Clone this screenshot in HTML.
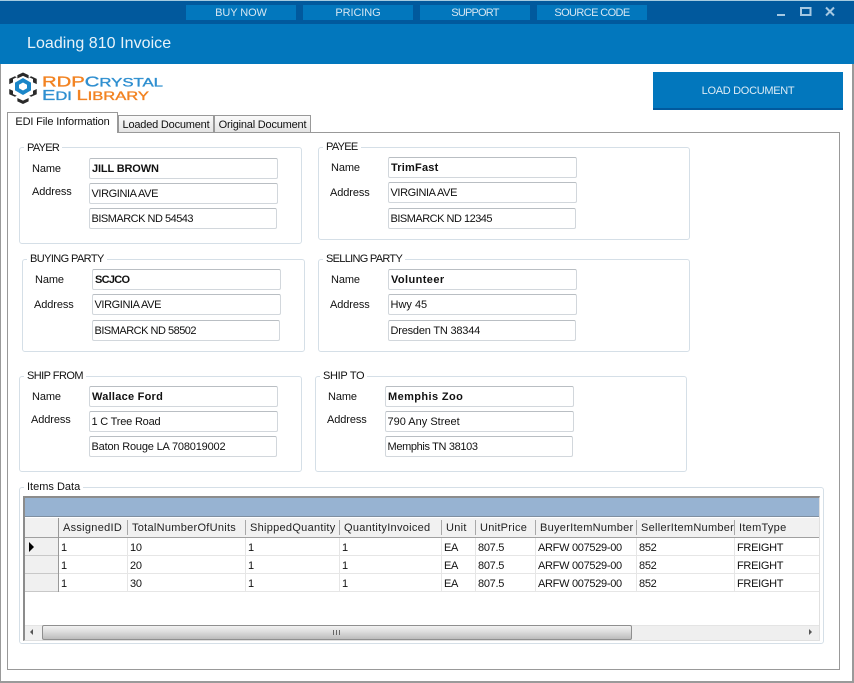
<!DOCTYPE html>
<html>
<head>
<meta charset="utf-8">
<style>
html,body{margin:0;padding:0;background:#fff}
#w{position:relative;width:854px;height:683px;overflow:hidden;background:#fff;font:11px "Liberation Sans",sans-serif;color:#111}
#w div,#w span.t{position:absolute;white-space:nowrap;box-sizing:border-box}
.t{line-height:18px;height:18px;letter-spacing:-.1px}
.nav{top:5px;width:110px;height:15px;background:#0277bd;color:#d5e6f2;text-align:center;line-height:17px;font-size:11px}
.g{border:1px solid #d5dfe7;border-radius:3px}
.l{background:#fff;padding:0 3px;line-height:14px;height:13px}
.i{height:21px;border:1px solid #d2d7dc;border-top-color:#b9bec3;border-radius:2px;line-height:21px;padding-left:1.5px;background:#fff;letter-spacing:-.4px}
.b{font-weight:bold;letter-spacing:.3px;padding-left:2px}
.h{top:518px;height:19px;line-height:20px;color:#222;letter-spacing:.28px}
.s{top:520px;width:1px;height:15px;background:#a8a8a8}
.c{height:18px;line-height:20px;letter-spacing:-.3px}
.rl{left:25px;width:33px;height:18px;background:#f0f0f0;border-bottom:1px solid #c8c8c8}
.v{top:538px;width:1px;height:54px;background:#e6e6e6}
.hl{left:59px;width:760px;height:1px;background:#e6e6e6}
</style>
</head>
<body>
<div id="w">
<!-- window chrome -->
<div style="left:0;top:0;width:854px;height:1px;background:#a5cbe0"></div>
<div style="left:0;top:1px;width:854px;height:23px;background:#01599d"></div>
<div style="left:0;top:24px;width:854px;height:40px;background:#0277bd"></div>
<div style="left:0;top:64px;width:1px;height:619px;background:#9a9a9a"></div>
<div style="left:852px;top:64px;width:2px;height:619px;background:#9a9a9a"></div>
<div style="left:0;top:681px;width:854px;height:2px;background:#9a9a9a"></div>

<div class="nav" style="left:186px;letter-spacing:-.1px">BUY NOW</div>
<div class="nav" style="left:303px;letter-spacing:-.1px">PRICING</div>
<div class="nav" style="left:420px;letter-spacing:-.8px">SUPPORT</div>
<div class="nav" style="left:537px;letter-spacing:-.6px">SOURCE CODE</div>

<svg style="position:absolute;left:770px;top:0" width="84" height="24" viewBox="0 0 84 24">
<rect x="7" y="14" width="8" height="2" fill="#a5c8e2"/>
<rect x="31" y="8" width="9.500" height="7" fill="none" stroke="#a5c8e2" stroke-width="2"/>
<path d="M56 7.500l8 8M64 7.500l-8 8" stroke="#a5c8e2" stroke-width="2" fill="none"/>
</svg>

<div style="left:27px;top:34px;height:20px;line-height:20px;font-size:16px;color:#e8f2f9;letter-spacing:.05px">Loading 810 Invoice</div>

<!-- logo -->
<svg style="position:absolute;left:8px;top:72px" width="160" height="32" viewBox="0 0 160 32">
<g fill="#2a2a2a" transform="translate(15 0) scale(1.25 1) translate(-15 0)">
<path d="M15 0.500l4.500 2.600v3.400l-4.500-2.600-4.500 2.600v-3.400z"/>
<path d="M21.500 4.300l4.500 2.600v5.200l-3 -1.700v-3.400l-3-1.700z"/>
<path d="M26 17v5.200l-4.500 2.600-1.500-1 3-1.700v-3.400z"/>
<path d="M19.500 26v3.400l-4.500 2.600-4.500-2.600v-3.400l4.500 2.600z"/>
<path d="M8.500 24.800l-4.500-2.600v-5.200l3 1.700v3.400l3 1.700z"/>
<path d="M4 12.100v-5.200l4.500-2.600 1.500 1-3 1.700v3.400z"/>
</g>
<path fill-rule="evenodd" d="M15 6l8 4.600v7.800l-8 4.600-8-4.600v-7.800zM15 10.500l-4 2.300v3.400l4 2.300 4-2.300v-3.400z" fill="#1a86c8"/>
<g stroke-width=".35">
<text x="34" y="14.500" font-family="Liberation Sans" font-size="14.500" textLength="121" lengthAdjust="spacingAndGlyphs"><tspan fill="#f28322" stroke="#f28322">RDP</tspan><tspan fill="#2f8fd0" stroke="#2f8fd0">C</tspan><tspan fill="#2f8fd0" stroke="#2f8fd0" font-size="12">RYSTAL</tspan></text>
<text x="34" y="28" font-family="Liberation Sans" font-size="14.500" textLength="107" lengthAdjust="spacingAndGlyphs"><tspan fill="#2f8fd0" stroke="#2f8fd0">E</tspan><tspan fill="#2f8fd0" stroke="#2f8fd0" font-size="12">DI </tspan><tspan fill="#f28322" stroke="#f28322">L</tspan><tspan fill="#f28322" stroke="#f28322" font-size="12">IBRARY</tspan></text>
</g>
</svg>

<div style="left:653px;top:72px;width:190px;height:38px;background:#0277bd;border-bottom:2px solid #01599d;color:#dcebf5;text-align:center;line-height:39px;font-size:11px;letter-spacing:-.3px">LOAD DOCUMENT</div>

<!-- tab panel -->
<div style="left:7px;top:132px;width:833px;height:538px;border:1px solid #999"></div>
<div style="left:118px;top:115px;width:96px;height:18px;background:linear-gradient(#fafafa,#e4e4e4);border:1px solid #999;text-align:center;line-height:18px;letter-spacing:-.2px">Loaded Document</div>
<div style="left:214px;top:115px;width:97px;height:18px;background:linear-gradient(#fafafa,#e4e4e4);border:1px solid #999;text-align:center;line-height:18px;letter-spacing:-.2px">Original Document</div>
<div style="left:7px;top:112px;width:111px;height:21px;background:#fff;border:1px solid #999;border-bottom:0;text-align:center;line-height:19px;letter-spacing:-.15px">EDI File Information</div>

<!-- PAYER -->
<div class="g" style="left:19px;top:147px;width:283px;height:97px"></div>
<div class="l" style="left:24px;top:141px;letter-spacing:-.7px">PAYER</div>
<span class="t" style="left:32px;top:160px">Name</span>
<span class="t" style="left:32px;top:183px">Address</span>
<div class="i b" style="left:89px;top:158px;width:189px;letter-spacing:-.15px">JILL BROWN</div>
<div class="i" style="left:89px;top:183px;width:189px">VIRGINIA AVE</div>
<div class="i" style="left:89px;top:208px;width:188px;letter-spacing:-.5px">BISMARCK ND 54543</div>

<!-- PAYEE -->
<div class="g" style="left:318px;top:147px;width:372px;height:93px"></div>
<div class="l" style="left:323px;top:140px;letter-spacing:-.7px">PAYEE</div>
<span class="t" style="left:331px;top:159px">Name</span>
<span class="t" style="left:330px;top:184px">Address</span>
<div class="i b" style="left:388px;top:157px;width:189px;letter-spacing:.2px">TrimFast</div>
<div class="i" style="left:388px;top:182px;width:189px">VIRGINIA AVE</div>
<div class="i" style="left:388px;top:208px;width:188px;letter-spacing:-.5px">BISMARCK ND 12345</div>

<!-- BUYING PARTY -->
<div class="g" style="left:22px;top:259px;width:283px;height:93px"></div>
<div class="l" style="left:27px;top:252px;letter-spacing:-.6px">BUYING PARTY</div>
<span class="t" style="left:35px;top:271px">Name</span>
<span class="t" style="left:34px;top:296px">Address</span>
<div class="i b" style="left:92px;top:269px;width:189px;letter-spacing:-.7px">SCJCO</div>
<div class="i" style="left:92px;top:294px;width:189px">VIRGINIA AVE</div>
<div class="i" style="left:92px;top:320px;width:188px;letter-spacing:-.5px">BISMARCK ND 58502</div>

<!-- SELLING PARTY -->
<div class="g" style="left:318px;top:259px;width:372px;height:93px"></div>
<div class="l" style="left:323px;top:252px;letter-spacing:-.7px">SELLING PARTY</div>
<span class="t" style="left:331px;top:271px">Name</span>
<span class="t" style="left:330px;top:296px">Address</span>
<div class="i b" style="left:388px;top:269px;width:189px;letter-spacing:.4px">Volunteer</div>
<div class="i" style="left:388px;top:294px;width:189px;letter-spacing:0">Hwy 45</div>
<div class="i" style="left:388px;top:320px;width:188px;letter-spacing:-.2px">Dresden TN 38344</div>

<!-- SHIP FROM -->
<div class="g" style="left:19px;top:376px;width:283px;height:96px"></div>
<div class="l" style="left:24px;top:369px;letter-spacing:-.55px">SHIP FROM</div>
<span class="t" style="left:32px;top:388px">Name</span>
<span class="t" style="left:31px;top:411px">Address</span>
<div class="i b" style="left:89px;top:386px;width:189px;letter-spacing:.25px">Wallace Ford</div>
<div class="i" style="left:89px;top:411px;width:189px;letter-spacing:-.2px">1 C Tree Road</div>
<div class="i" style="left:89px;top:436px;width:188px;letter-spacing:-.18px">Baton Rouge LA 708019002</div>

<!-- SHIP TO -->
<div class="g" style="left:315px;top:376px;width:372px;height:96px"></div>
<div class="l" style="left:320px;top:369px;letter-spacing:-.3px">SHIP TO</div>
<span class="t" style="left:328px;top:388px">Name</span>
<span class="t" style="left:327px;top:411px">Address</span>
<div class="i b" style="left:385px;top:386px;width:189px;letter-spacing:.4px">Memphis Zoo</div>
<div class="i" style="left:385px;top:411px;width:189px;letter-spacing:0">790 Any Street</div>
<div class="i" style="left:385px;top:436px;width:188px;letter-spacing:-.35px">Memphis TN 38103</div>

<!-- ITEMS -->
<div class="g" style="left:19px;top:487px;width:805px;height:157px"></div>
<div class="l" style="left:24px;top:480px">Items Data</div>
<div style="left:23px;top:496px;width:797px;height:145px;background:#fff;border-left:2px solid #8c8c8c;border-top:2px solid #8c8c8c;border-right:1px solid #e0e0e0;border-bottom:1px solid #e0e0e0"></div>
<div style="left:25px;top:498px;width:794px;height:19px;background:#97b3d2;border-bottom:1px solid #7f8fa0"></div>
<div style="left:25px;top:518px;width:794px;height:20px;background:#f1f1f1;border-bottom:1px solid #a0a0a0"></div>
<div style="left:58px;top:518px;width:1px;height:74px;background:#999"></div>

<div class="h" style="left:63px">AssignedID</div>
<div class="h" style="left:132px">TotalNumberOfUnits</div>
<div class="h" style="left:250px">ShippedQuantity</div>
<div class="h" style="left:344px">QuantityInvoiced</div>
<div class="h" style="left:446px">Unit</div>
<div class="h" style="left:480px">UnitPrice</div>
<div class="h" style="left:540px">BuyerItemNumber</div>
<div class="h" style="left:641px">SellerItemNumber</div>
<div class="h" style="left:739px">ItemType</div>
<div class="s" style="left:127px"></div><div class="s" style="left:245px"></div><div class="s" style="left:339px"></div><div class="s" style="left:441px"></div><div class="s" style="left:475px"></div><div class="s" style="left:535px"></div><div class="s" style="left:636px"></div><div class="s" style="left:734px"></div>

<div class="v" style="left:127px"></div><div class="v" style="left:245px"></div><div class="v" style="left:339px"></div><div class="v" style="left:441px"></div><div class="v" style="left:475px"></div><div class="v" style="left:535px"></div><div class="v" style="left:636px"></div><div class="v" style="left:734px"></div>
<div class="hl" style="top:555px"></div><div class="hl" style="top:573px"></div><div class="hl" style="top:591px"></div>

<div class="rl" style="top:538px"></div><div class="rl" style="top:556px"></div><div class="rl" style="top:574px"></div>
<svg style="position:absolute;left:29px;top:542px" width="6" height="10"><path d="M0 0l5 5-5 5z" fill="#000"/></svg>

<div class="c" style="left:61px;top:538px">1</div><div class="c" style="left:130px;top:538px">10</div><div class="c" style="left:248px;top:538px">1</div><div class="c" style="left:342px;top:538px">1</div><div class="c" style="left:444px;top:538px">EA</div><div class="c" style="left:478px;top:538px">807.5</div><div class="c" style="left:538px;top:538px">ARFW 007529-00</div><div class="c" style="left:639px;top:538px">852</div><div class="c" style="left:737px;top:538px">FREIGHT</div>
<div class="c" style="left:61px;top:556px">1</div><div class="c" style="left:130px;top:556px">20</div><div class="c" style="left:248px;top:556px">1</div><div class="c" style="left:342px;top:556px">1</div><div class="c" style="left:444px;top:556px">EA</div><div class="c" style="left:478px;top:556px">807.5</div><div class="c" style="left:538px;top:556px">ARFW 007529-00</div><div class="c" style="left:639px;top:556px">852</div><div class="c" style="left:737px;top:556px">FREIGHT</div>
<div class="c" style="left:61px;top:574px">1</div><div class="c" style="left:130px;top:574px">30</div><div class="c" style="left:248px;top:574px">1</div><div class="c" style="left:342px;top:574px">1</div><div class="c" style="left:444px;top:574px">EA</div><div class="c" style="left:478px;top:574px">807.5</div><div class="c" style="left:538px;top:574px">ARFW 007529-00</div><div class="c" style="left:639px;top:574px">852</div><div class="c" style="left:737px;top:574px">FREIGHT</div>

<!-- scrollbar -->
<div style="left:25px;top:625px;width:794px;height:15px;background:#efefef;border-top:1px solid #e4e4e4"></div>
<div style="left:42px;top:625px;width:590px;height:15px;background:linear-gradient(#f2f2f2,#dcdcdc 45%,#bcbcbc);border:1px solid #8f8f8f;border-radius:2px"></div>
<div style="left:333px;top:630px;width:7px;height:5px;background:repeating-linear-gradient(90deg,#666 0,#666 1px,transparent 1px,transparent 3px)"></div>
<svg style="position:absolute;left:29px;top:628px" width="6" height="9"><path d="M4 1v6L1 4z" fill="#555"/></svg>
<svg style="position:absolute;left:808px;top:628px" width="6" height="9"><path d="M1 1v6l3-3z" fill="#555"/></svg>
</div>
</body>
</html>
